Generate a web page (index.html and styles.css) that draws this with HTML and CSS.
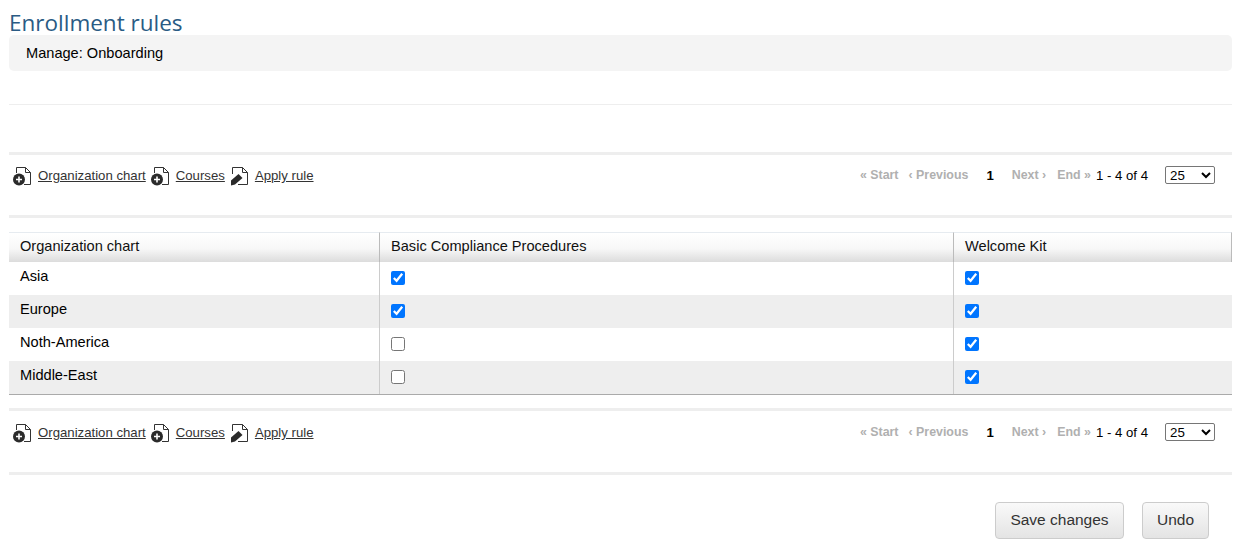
FILE: index.html
```html
<!DOCTYPE html>
<html lang="en">
<head>
<meta charset="utf-8">
<title>Enrollment rules</title>
<link rel="stylesheet" href="styles.css">
</head>
<body>
<svg class="defs" width="0" height="0" aria-hidden="true">
  <symbol id="i-add" viewBox="1 0 20 20">
    <path d="M4.5 7V1.5H13.5L18.5 6.5V18.5H12" fill="none" stroke="#333" stroke-width="1"/>
    <path d="M13.5 1.5V6.5H18.5" fill="none" stroke="#333" stroke-width="1"/>
    <circle cx="7" cy="13.5" r="6" fill="#2b2b2b"/>
    <path d="M7 10.5V16.5M4 13.5H10" stroke="#fff" stroke-width="1.6"/>
  </symbol>
  <symbol id="i-edit" viewBox="1 0 20 20">
    <path d="M3.5 8V1.5H13.5L18.5 6.5V18.5H9" fill="none" stroke="#333" stroke-width="1"/>
    <path d="M13.5 1.5V6.5H18.5" fill="none" stroke="#333" stroke-width="1"/>
    <path d="M2 14.5L9.5 8L13.5 12L6 18.5L2 19.5Z" fill="#2b2b2b"/>
  </symbol>
</svg>
<main class="page">
  <h1 class="title">Enrollment rules</h1>
  <div class="info">Manage: Onboarding</div>
  <hr class="thin">

  <div class="toolbar first">
    <div class="actions">
      <svg class="icon"><use href="#i-add"/></svg><a href="#" class="link">Organization chart</a>
      <svg class="icon"><use href="#i-add"/></svg><a href="#" class="link">Courses</a>
      <svg class="icon"><use href="#i-edit"/></svg><a href="#" class="link">Apply rule</a>
    </div>
    <div class="pager">
      <span class="off s1">« Start</span>
      <span class="off s2">‹ Previous</span>
      <b class="cur">1</b>
      <span class="off s3">Next ›</span>
      <span class="off s4">End »</span>
      <span class="count">1 - 4 of 4</span>
      <select class="size"><option>25</option></select>
    </div>
  </div>

  <table class="grid">
    <thead>
      <tr><th class="c1">Organization chart</th><th class="c2">Basic Compliance Procedures</th><th class="c3">Welcome Kit</th></tr>
    </thead>
    <tbody>
      <tr><td>Asia</td><td><input type="checkbox" checked></td><td><input type="checkbox" checked></td></tr>
      <tr class="alt"><td>Europe</td><td><input type="checkbox" checked></td><td><input type="checkbox" checked></td></tr>
      <tr><td>Noth-America</td><td><input type="checkbox"></td><td><input type="checkbox" checked></td></tr>
      <tr class="alt"><td>Middle-East</td><td><input type="checkbox"></td><td><input type="checkbox" checked></td></tr>
    </tbody>
  </table>

  <div class="toolbar second">
    <div class="actions">
      <svg class="icon"><use href="#i-add"/></svg><a href="#" class="link">Organization chart</a>
      <svg class="icon"><use href="#i-add"/></svg><a href="#" class="link">Courses</a>
      <svg class="icon"><use href="#i-edit"/></svg><a href="#" class="link">Apply rule</a>
    </div>
    <div class="pager">
      <span class="off s1">« Start</span>
      <span class="off s2">‹ Previous</span>
      <b class="cur">1</b>
      <span class="off s3">Next ›</span>
      <span class="off s4">End »</span>
      <span class="count">1 - 4 of 4</span>
      <select class="size"><option>25</option></select>
    </div>
  </div>

  <div class="buttons">
    <button class="btn save">Save changes</button>
    <button class="btn undo">Undo</button>
  </div>
</main>
</body>
</html>
```
FILE: styles.css
```css
* { box-sizing: border-box; }
html, body { margin: 0; padding: 0; background: #fff; }
body { font-family: "Liberation Sans", Arial, sans-serif; font-size: 14px; color: #000; }
.defs { position: absolute; }
.page { padding: 0 10px 0 9px; }
.title {
  margin: 0; height: 35px; padding-top: 9px;
  font: 400 22.5px/28px "Open Sans", sans-serif; color: #2a5b84;
}
.info {
  height: 36px; padding-left: 17px;
  background: #f4f4f4; border-radius: 5px;
  font-size: 14.6px; line-height: 37px;
}
.thin { margin: 33px 0 0; height: 1px; border: 0; background: #eee; }
.toolbar {
  height: 66px; padding: 0 17px 0 4px;
  display: flex; justify-content: space-between; align-items: flex-start;
  border-top: 3px solid #eee; border-bottom: 3px solid #eee;
}
.toolbar.first { margin-top: 47px; }
.toolbar.second { margin-top: 13px; height: 67px; padding-top: 1px; }
.actions { display: flex; align-items: center; height: 40px; }
.icon { width: 20px; height: 20px; margin-top: 1px; flex: none; }
.link { color: #333; margin: 1px 5px 0; font-size: 13.2px; }
.pager { display: flex; align-items: center; height: 40px; font-size: 13.2px; }
.off { color: #b0b0b0; font-weight: 700; font-size: 12.4px; }
.s2 { margin-left: 10px; }
.cur { margin-left: 18px; margin-right: 18px; }
.s4 { margin-left: 11px; }
.count { margin-left: 5px; }
.size {
  margin-left: 17px; width: 50px; height: 18px; padding: 0;
  font: 13.3px "Liberation Sans", Arial, sans-serif;
  background: #fff; border: 1px solid #767676; border-radius: 2px; color: #000;
}
.grid {
  width: 100%; margin-top: 14px; border-collapse: separate; border-spacing: 0;
  table-layout: fixed; border-bottom: 1px solid #aaa; font-size: 14.6px;
}
.grid th {
  height: 30px; padding: 0 11px 4px; text-align: left; font-weight: 400; color: #111;
  border-top: 1px solid #e6ebf0; border-right: 1px solid #bbb;
  background: linear-gradient(#fff 0%, #f7f7f7 55%, #dcdcdc 100%);
}
.grid th.c1 { width: 371px; }
.grid th.c2 { width: 574px; }
.grid td {
  height: 33px; padding: 0 11px 5px; vertical-align: middle;
  border-right: 1px solid #ccc;
}
.grid td:last-child { border-right: 0; }
.grid td:not(:first-child) { padding-bottom: 2px; padding-top: 0; }
.grid td input { display: block; margin: 0; width: 14px; height: 14px; }
.alt td { background: #eee; }
.buttons { display: flex; justify-content: flex-end; gap: 18px; margin-top: 27px; padding-right: 23px; }
.btn {
  height: 37px; padding: 0 0 2px; font: 15.5px "Liberation Sans", Arial, sans-serif; color: #333;
  border: 1px solid #ccc; border-radius: 4px;
  background: linear-gradient(#f9f9f9, #e4e4e4);
}
.save { width: 129px; }
.undo { width: 67px; }
```
